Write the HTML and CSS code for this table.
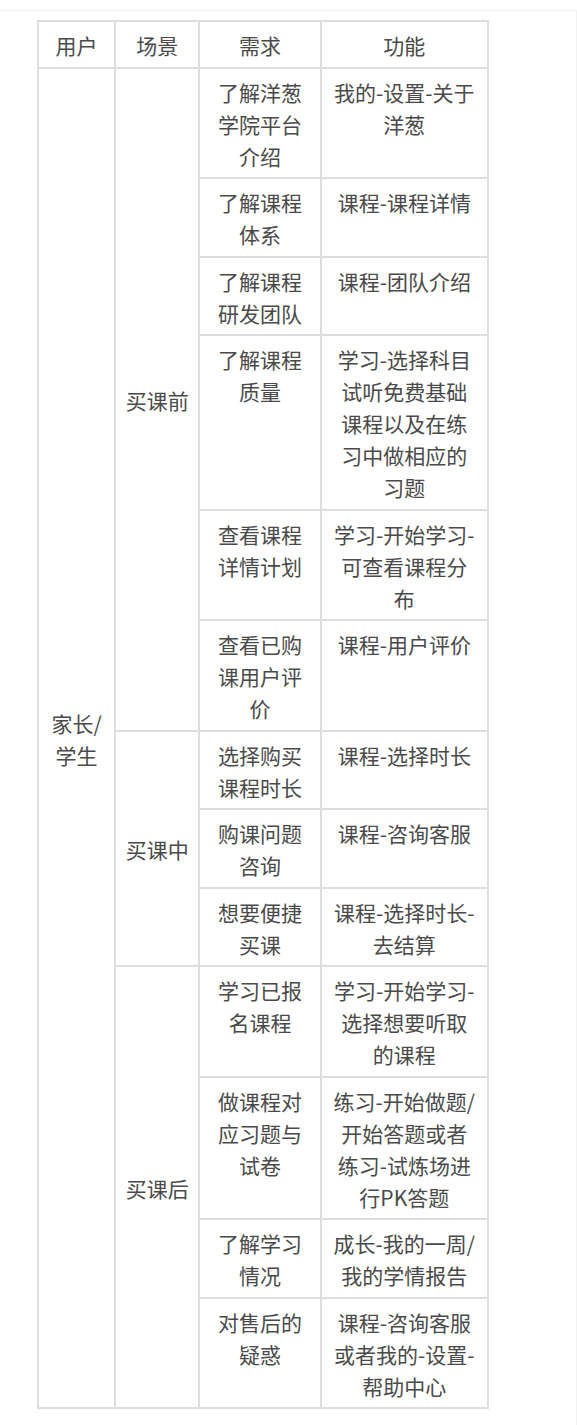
FILE: index.html
```html
<!DOCTYPE html>
<html lang="zh-CN">
<head>
<meta charset="utf-8">
<title>用户需求表</title>
<link rel="stylesheet" href="styles.css">
</head>
<body>
<div class="card">
  <table class="req-table">
    <colgroup>
      <col class="c-user">
      <col class="c-scene">
      <col class="c-need">
      <col class="c-func">
    </colgroup>
    <thead>
      <tr><th>用户</th><th>场景</th><th>需求</th><th>功能</th></tr>
    </thead>
    <tbody>
      <tr>
        <td class="mid" rowspan="13">家长/<br>学生</td>
        <td class="mid" rowspan="6">买课前</td>
        <td>了解洋葱<br>学院平台<br>介绍</td>
        <td>我的-设置-关于<br>洋葱</td>
      </tr>
      <tr><td>了解课程<br>体系</td><td>课程-课程详情</td></tr>
      <tr><td>了解课程<br>研发团队</td><td>课程-团队介绍</td></tr>
      <tr><td>了解课程<br>质量</td><td>学习-选择科目<br>试听免费基础<br>课程以及在练<br>习中做相应的<br>习题</td></tr>
      <tr><td>查看课程<br>详情计划</td><td>学习-开始学习-<br>可查看课程分<br>布</td></tr>
      <tr><td>查看已购<br>课用户评<br>价</td><td>课程-用户评价</td></tr>
      <tr>
        <td class="mid" rowspan="3">买课中</td>
        <td>选择购买<br>课程时长</td>
        <td>课程-选择时长</td>
      </tr>
      <tr><td>购课问题<br>咨询</td><td>课程-咨询客服</td></tr>
      <tr><td>想要便捷<br>买课</td><td>课程-选择时长-<br>去结算</td></tr>
      <tr>
        <td class="mid" rowspan="4">买课后</td>
        <td>学习已报<br>名课程</td>
        <td>学习-开始学习-<br>选择想要听取<br>的课程</td>
      </tr>
      <tr><td>做课程对<br>应习题与<br>试卷</td><td>练习-开始做题/<br>开始答题或者<br>练习-试炼场进<br>行PK答题</td></tr>
      <tr><td>了解学习<br>情况</td><td>成长-我的一周/<br>我的学情报告</td></tr>
      <tr><td>对售后的<br>疑惑</td><td>课程-咨询客服<br>或者我的-设置-<br>帮助中心</td></tr>
    </tbody>
  </table>
</div>
</body>
</html>
```

FILE: styles.css
```css
html, body {
  margin: 0;
  padding: 0;
  background: #ffffff;
}

body {
  font-family: "Noto Sans CJK SC", "Noto Sans", sans-serif;
  color: #4a4a4a;
}

.card {
  margin-top: 10px;
  border-top: 1px solid #f0f0f0;
  border-right: 1px solid #f2f2f2;
  padding: 9px 0 16px 37px;
  min-height: 1390px;
  box-sizing: border-box;
}

.req-table {
  border-collapse: collapse;
  table-layout: fixed;
  width: 452px;
}

.c-user { width: 77px; }
.c-scene { width: 84px; }
.c-need { width: 121px; }
.c-func { width: 167px; }

.req-table th,
.req-table td {
  border: 2px solid #dedede;
  padding: 7px 4px 5.5px;
  font-size: 21px;
  line-height: 32px;
  font-weight: normal;
  text-align: center;
  vertical-align: top;
  white-space: nowrap;
}

.req-table td.mid {
  vertical-align: middle;
}
```
